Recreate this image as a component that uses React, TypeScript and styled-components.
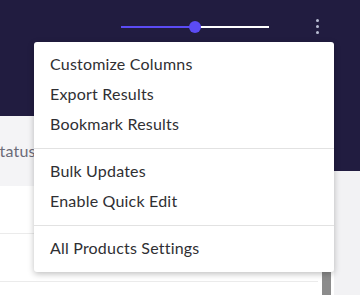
import React from "react";
import styled, { createGlobalStyle } from "styled-components";

const Global = createGlobalStyle`
  html, body { margin: 0; padding: 0; }
  body { background: #f2f2f4; font-family: "Lato", "Liberation Sans", sans-serif; overflow: hidden; }
`;

const Page = styled.div`
  position: relative;
  width: 360px;
  height: 295px;
  overflow: hidden;
  background: #f2f2f4;
`;

const Header = styled.div`
  height: 171px;
  background: #211c40;
`;

const TopBar = styled.div`
  height: 52px;
  display: flex;
  align-items: center;
  justify-content: flex-end;
  padding-right: 41px;
  gap: 47px;
`;

const Slider = styled.div`
  position: relative;
  width: 148px;
  height: 2px;
  background: #ffffff;
  margin-top: 2px;
`;

const SliderFill = styled.div`
  position: absolute;
  left: 0;
  top: 0;
  height: 2px;
  background: #5b4bf5;
`;

const Thumb = styled.div`
  position: absolute;
  top: -5px;
  width: 12px;
  height: 12px;
  margin-left: -6px;
  border-radius: 50%;
  background: #5b4bf5;
`;

const Kebab = styled.div`
  display: flex;
  flex-direction: column;
  gap: 3px;
`;

const Dot = styled.span`
  width: 3px;
  height: 3px;
  border-radius: 50%;
  background: #b9bdd3;
`;

const Card = styled.div`
  margin-top: -55px;
  width: 334px;
  height: 200px;
  background: #ffffff;
  position: relative;
`;

const HeadRow = styled.div`
  height: 70px;
  background: #f4f4f6;
  display: flex;
  align-items: center;
  font-size: 16px;
  letter-spacing: 0.2px;
  color: #6b6b78;
`;

const HeadText = styled.span`
  margin-left: -9px;
  margin-top: -2px;
`;

const Row = styled.div`
  height: 48px;
  width: 318px;
  border-bottom: 1px solid #ebebeb;
  box-sizing: border-box;
`;

const Scrollbar = styled.div`
  position: absolute;
  left: 322px;
  top: 155px;
  width: 9px;
  height: 60px;
  background: #8c8c8c;
`;

const Menu = styled.div`
  position: absolute;
  left: 34px;
  top: 42px;
  width: 300px;
  background: #ffffff;
  border-radius: 3px;
  box-shadow: 0 2px 6px rgba(0, 0, 0, 0.25);
`;

const Group = styled.div`
  padding: 8px 0;
  & + & { border-top: 1px solid #e2e2e2; }
`;

const Item = styled.div`
  height: 30px;
  box-sizing: border-box;
  padding-bottom: 3px;
  display: flex;
  align-items: center;
  padding-left: 16px;
  font-size: 16px;
  letter-spacing: 0.2px;
  color: #2f2f33;
`;

const groups = [
  ["Customize Columns", "Export Results", "Bookmark Results"],
  ["Bulk Updates", "Enable Quick Edit"],
  ["All Products Settings"],
];

export default function App() {
  const pct = 50;
  return (
    <Page>
      <Global />
      <Header>
        <TopBar>
          <Slider>
            <SliderFill style={{ width: `${pct}%` }} />
            <Thumb style={{ left: `${pct}%` }} />
          </Slider>
          <Kebab>
            <Dot />
            <Dot />
            <Dot />
          </Kebab>
        </TopBar>
      </Header>
      <Card>
        <HeadRow>
          <HeadText>Status</HeadText>
        </HeadRow>
        <Row />
        <Row />
        <Scrollbar />
      </Card>
      <Menu>
        {groups.map((g, i) => (
          <Group key={i}>
            {g.map((t) => (
              <Item key={t}>{t}</Item>
            ))}
          </Group>
        ))}
      </Menu>
    </Page>
  );
}
